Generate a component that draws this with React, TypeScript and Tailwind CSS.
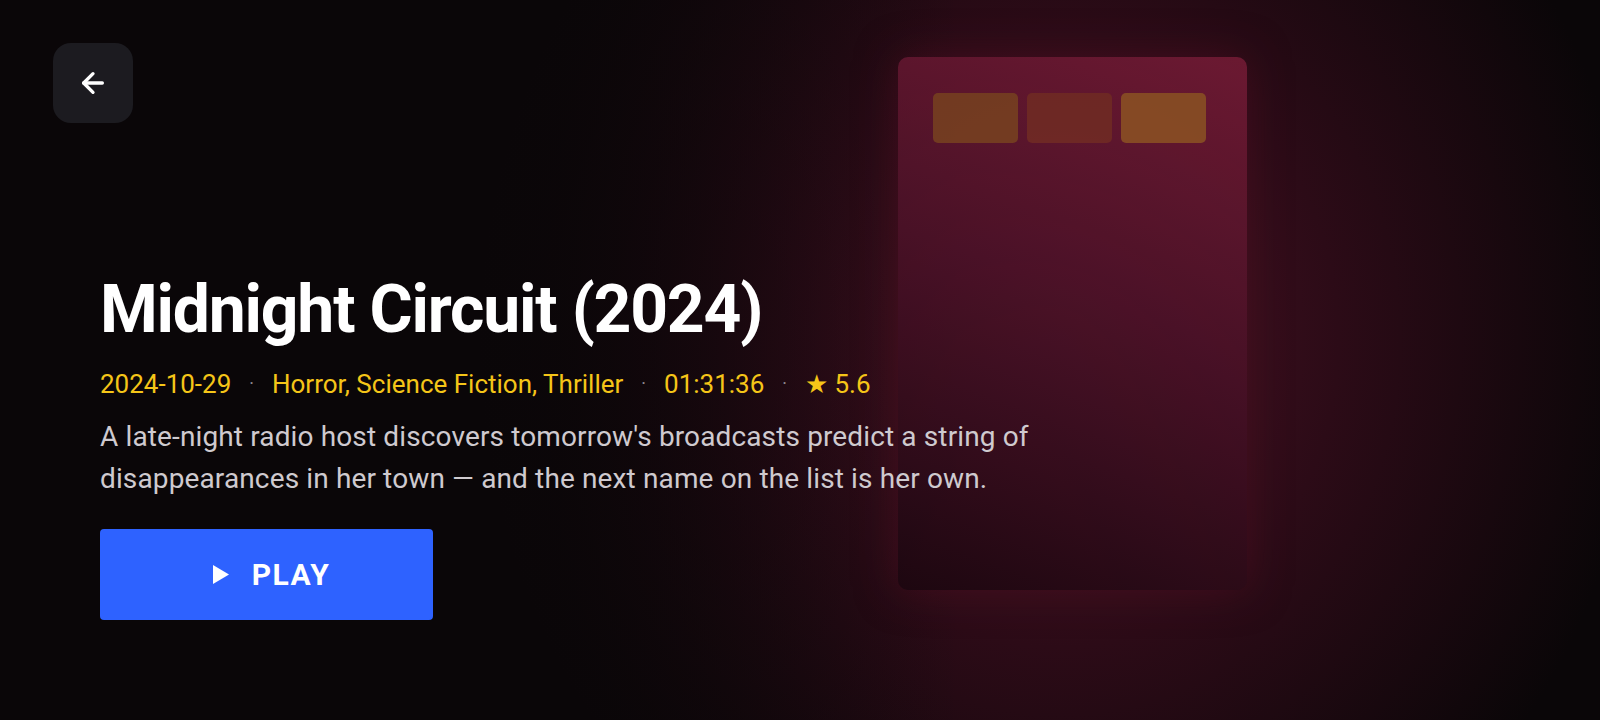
import { ArrowLeft } from 'lucide-react'

const meta = ['2024-10-29', 'Horror, Science Fiction, Thriller', '01:31:36']

function Dot() {
    return <span className="mx-[18px] text-[18px] text-[#8f8a8f]">·</span>
}

export default function App() {
    return (
        <div className="relative h-[720px] w-[1600px] overflow-hidden bg-[#0a0608] font-['Roboto',sans-serif]">
            {/* backdrop: red glow behind the poster art */}
            <div className="absolute inset-0 bg-[radial-gradient(ellipse_580px_640px_at_1060px_340px,#4c1325_0%,#2c0b17_48%,#0a0608_100%)]" />
            <div className="absolute inset-0 bg-[linear-gradient(90deg,#0a0608_0%,rgba(10,6,8,0.85)_35%,rgba(10,6,8,0)_60%)]" />
            <div className="absolute inset-0 pl-[898px] pt-[57px]">
                <div className="flex h-[533px] w-[349px] gap-[9px] rounded-[10px] bg-[linear-gradient(200deg,#731b35_0%,#4c1228_45%,#1c0710_100%)] px-[35px] pt-[36px] opacity-90 shadow-[0_0_40px_rgba(90,20,40,0.5)]">
                    <div className="h-[50px] w-[85px] rounded-[5px] bg-[#7a4022]" />
                    <div className="h-[50px] w-[85px] rounded-[5px] bg-[#742b26]" />
                    <div className="h-[50px] w-[85px] rounded-[5px] bg-[#8e5026]" />
                </div>
            </div>

            <div className="relative flex h-full flex-col pl-[100px]">
                <button className="ml-[-47px] mt-[43px] flex h-[80px] w-[80px] items-center justify-center rounded-[18px] bg-[#1c1b20]">
                    <ArrowLeft className="h-[32px] w-[32px] text-white" strokeWidth={2.5} />
                </button>

                <h1 className="mt-[154px] text-[66px] font-bold leading-none tracking-[-1.2px] text-white">
                    Midnight Circuit (2024)
                </h1>

                <div className="mt-[28px] flex items-center text-[26px] leading-none text-[#f5c518]">
                    {meta.map((m) => (
                        <span key={m} className="flex items-center">
                            {m}
                            <Dot />
                        </span>
                    ))}
                    <span>★ 5.6</span>
                </div>

                <p className="mt-[19px] w-[1020px] text-[28px] leading-[42px] tracking-[0.13px] text-[#cfcacf]">
                    A late-night radio host discovers tomorrow's broadcasts predict a string of disappearances in her town — and the next name on the list is her own.
                </p>

                <button className="mt-[29px] flex h-[91px] w-[333px] items-center justify-center gap-[22px] rounded-[4px] bg-[#2e62ff] pl-[9px] text-[30px] font-bold tracking-[1.5px] text-white">
                    <svg width="18" height="21" viewBox="0 0 18 21">
                        <path d="M1 1 L17 10.5 L1 20 Z" fill="white" />
                    </svg>
                    PLAY
                </button>
            </div>
        </div>
    )
}
